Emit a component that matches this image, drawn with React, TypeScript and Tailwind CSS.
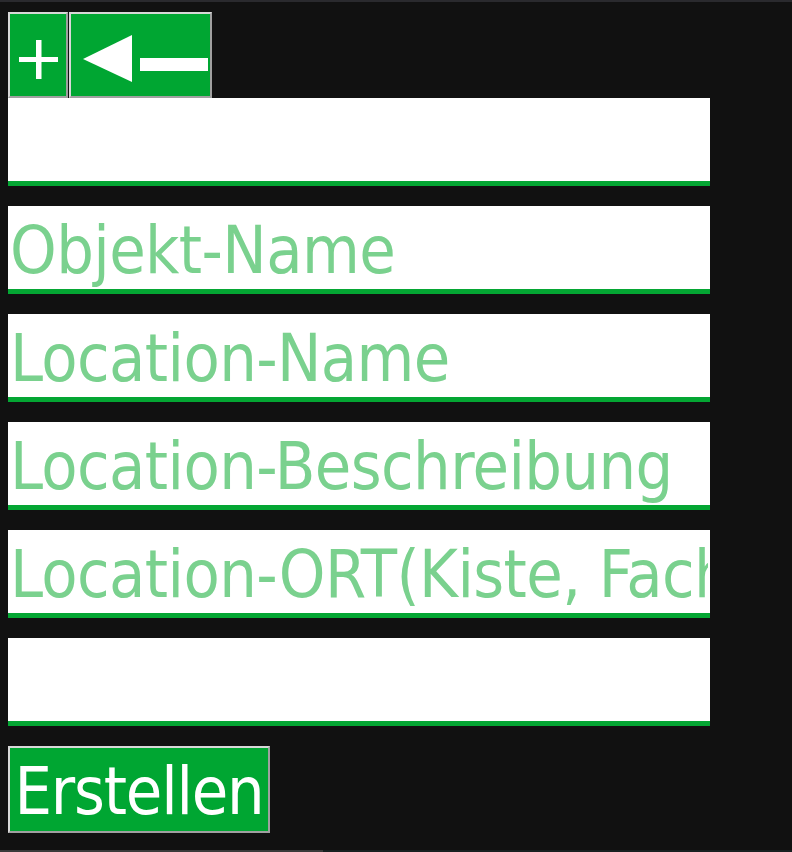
import React from "react";

const font = { fontFamily: '"DejaVu Sans Condensed", "DejaVu Sans", sans-serif' };

function Field({ placeholder }: { placeholder?: string }) {
  return (
    <input
      type="text"
      placeholder={placeholder}
      style={font}
      className="block w-[702px] h-[88px] mb-[20px] bg-white border-0 border-b-[5px] border-[#04a633] px-[2px] pt-[5px] text-[66px] tracking-[-0.6px] leading-[79px] text-black placeholder:text-[#7ad18e] outline-none"
    />
  );
}

export default function App() {
  return (
    <div className="min-h-[852px] w-[792px] bg-[#111111] flex flex-col" style={font}>
      <div className="h-[2px] bg-[#2a2a2e]" />
      <div className="flex-1 pl-[8px] pt-[10px]">
        <div className="flex">
          <button className="w-[60px] h-[86px] bg-[#00a632] border-2 border-t-[#d8d8d8] border-l-[#d8d8d8] border-r-[#a0a0a0] border-b-[#a0a0a0] p-0 flex">
            <svg width="56" height="82" viewBox="0 0 56 82">
              <rect x="9" y="43" width="39" height="5" fill="#fff" />
              <rect x="26" y="26" width="5.5" height="39" fill="#fff" />
            </svg>
          </button>
          <button className="ml-[1px] w-[143px] h-[86px] bg-[#00a632] border-2 border-t-[#d8d8d8] border-l-[#d8d8d8] border-r-[#a0a0a0] border-b-[#a0a0a0] p-0 flex">
            <svg width="139" height="82" viewBox="0 0 139 82">
              <polygon points="12,45 61,21 61,68" fill="#fff" />
              <rect x="69" y="44" width="68" height="13" fill="#fff" />
            </svg>
          </button>
        </div>
        <Field />
        <Field placeholder="Objekt-Name" />
        <Field placeholder="Location-Name" />
        <Field placeholder="Location-Beschreibung" />
        <Field placeholder="Location-ORT(Kiste, Fach)" />
        <Field />
        <button
          style={font}
          className="w-[262px] h-[87px] bg-[#00a632] border-2 border-t-[#d8d8d8] border-l-[#d8d8d8] border-r-[#a0a0a0] border-b-[#a0a0a0] text-white text-[66px] tracking-[-1.2px] leading-none p-0 pt-[4px] flex items-center justify-center"
        >
          Erstellen
        </button>
      </div>
      <div className="h-[2px] flex">
        <div className="w-[323px] bg-[#3a3a3a]" />
        <div className="flex-1 bg-[#182020]" />
      </div>
    </div>
  );
}
